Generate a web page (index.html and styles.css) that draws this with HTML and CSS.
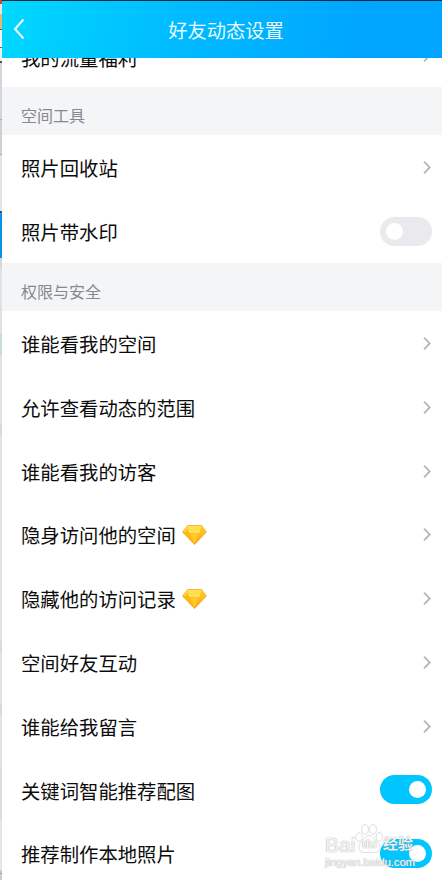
FILE: index.html
```html
<!DOCTYPE html>
<html lang="zh-CN">
<head>
    <meta charset="UTF-8">
    <meta name="viewport" content="width=device-width, initial-scale=1.0">
    <title>好友动态设置</title>
    <link rel="stylesheet" href="styles.css">
</head>
<body>
    <svg class="defs" width="0" height="0">
        <defs>
            <linearGradient id="gold" x1="0" y1="0" x2="0" y2="1">
                <stop offset="0" stop-color="#ffd43a"/>
                <stop offset="1" stop-color="#fb9d09"/>
            </linearGradient>
            <symbol id="arrow" viewBox="0 0 8 13">
                <path d="M1 .7l5.700 5.800L1 12.300" fill="none" stroke="#b2b6bd" stroke-width="1.8"/>
            </symbol>
            <symbol id="diamond" viewBox="0 0 25 20">
                <path d="M5.5 .5h14L24.5 7 12.5 19.5.5 7z" fill="url(#gold)" stroke="#f3a41c" stroke-width=".7" stroke-linejoin="round"/>
                <path d="M5.5 1L1 7h5.5z" fill="#ffc126"/>
                <path d="M5.5 1h14L18 7H7z" fill="#ffe04b"/>
                <path d="M19.5 1L24 7h-6z" fill="#ffc22b"/>
                <path d="M7 7h11l-5.500 12z" fill="#ffc928"/>
                <path d="M1 7h6l5.500 12z" fill="#ffb512"/>
                <path d="M6 1.500L2.500 6.500M7 7h11" fill="none" stroke="#fff0a0" stroke-width=".8"/>
            </symbol>
        </defs>
    </svg>
    <div class="edge"></div>
    <div class="screen">
        <header class="header">
            <svg class="back" width="12" height="22" viewBox="0 0 12 22">
                <path d="M11.500 1.500L3 11l8.500 9.500" fill="none" stroke="#e8fbff" stroke-width="2.2"/>
            </svg>
            <h1>好友动态设置</h1>
        </header>
        <main class="list">
            <div class="row first"><span>我的流量福利</span><svg class="arrow"><use href="#arrow"/></svg></div>

            <h2 class="section">空间工具</h2>
            <div class="row"><span>照片回收站</span><svg class="arrow"><use href="#arrow"/></svg></div>
            <div class="row"><span>照片带水印</span><i class="switch"></i></div>

            <h2 class="section">权限与安全</h2>
            <div class="row"><span>谁能看我的空间</span><svg class="arrow"><use href="#arrow"/></svg></div>
            <div class="row"><span>允许查看动态的范围</span><svg class="arrow"><use href="#arrow"/></svg></div>
            <div class="row"><span>谁能看我的访客</span><svg class="arrow"><use href="#arrow"/></svg></div>
            <div class="row"><span>隐身访问他的空间</span><svg class="diamond"><use href="#diamond"/></svg><svg class="arrow"><use href="#arrow"/></svg></div>
            <div class="row"><span>隐藏他的访问记录</span><svg class="diamond"><use href="#diamond"/></svg><svg class="arrow"><use href="#arrow"/></svg></div>
            <div class="row"><span>空间好友互动</span><svg class="arrow"><use href="#arrow"/></svg></div>
            <div class="row"><span>谁能给我留言</span><svg class="arrow"><use href="#arrow"/></svg></div>
            <div class="row"><span>关键词智能推荐配图</span><i class="switch on"></i></div>
            <div class="row"><span>推荐制作本地照片</span><i class="switch on"></i></div>
        </main>
    </div>
    <div class="watermark">
        <div class="brand">
            <b>Bai</b>
            <span class="paw">
                <svg width="28" height="29" viewBox="0 0 28 29">
                    <ellipse cx="4" cy="13" rx="3.200" ry="4.200"/>
                    <ellipse cx="10" cy="5.500" rx="3.400" ry="4.700"/>
                    <ellipse cx="18" cy="5.500" rx="3.400" ry="4.700"/>
                    <ellipse cx="24.300" cy="13" rx="3.200" ry="4.200"/>
                    <path d="M14 11.500c-4 0-5 4-8 6.500s-3 10 2 10.500 8-.8 12 0 7-6 3-9.500-5-7.500-9-7.500z"/>
                </svg>
                <em>du</em>
            </span>
            <strong>经验</strong>
        </div>
        <div class="site">jingyan.baidu.com</div>
    </div>
</body>
</html>
```
FILE: styles.css
```css
body {
    margin: 0;
    height: 880px;
    display: flex;
    overflow: hidden;
    position: relative;
    background: #fff;
    font-family: "Noto Sans CJK SC", sans-serif;
}

.defs {
    position: absolute;
}

/* sliver of the window behind the phone screen */
.edge {
    width: 2px;
    flex: none;
    background: linear-gradient(#c8452b 0 4px, #e4e6e8 4px 14px, #e9b96a 14px 29px, #555 29px 30px, #f2f2f2 30px 47px, #666 47px 48px, #eee 48px 61px, #555 61px 63px, #d4d5d8 63px 119px, #aaa 119px 120px, #d0d0d2 120px 154px, #aaa 154px 155px, #e4e4e4 155px 211px, #38506e 211px 213px, #0c94e4 213px 258px, #d8d8d8 258px 269px, #e1e1e1 269px 334px, #c9dadd 334px 355px, #e2e2e2 355px 424px, #d9d9d9 424px 435px, #e2e2e2 435px 641px, #dadada 641px 652px, #e2e2e2 652px 704px, #dadada 704px 715px, #e2e2e2 715px 767px, #dcdcdc 767px 820px, #e6e6e6 820px 870px, #ccc 870px 873px, #999 873px 874px, #ccc 874px);
}

.screen {
    flex: 1;
}

.header {
    position: relative;
    z-index: 1;
    box-sizing: border-box;
    height: 58px;
    padding: 0 12px 0 10px;
    border-top: 1px solid #06283e;
    display: flex;
    align-items: center;
    background: linear-gradient(100deg, #00d8ff 0%, #00baff 42%, #00a5ff 82%, #00a5ff 100%);
}

.back {
    margin-top: -1px;
}

h1 {
    flex: 1;
    margin: 0;
    padding-right: 2px;
    color: #e8fbff;
    font-size: 19.3px;
    font-weight: 400;
    line-height: 28px;
    text-align: center;
}

/* scrolled part way under the header */
.list {
    margin-top: -34px;
}

.row {
    box-sizing: border-box;
    height: 63.8px;
    padding: 0 10px 0 19px;
    display: flex;
    align-items: center;
    color: #0c0c0c;
    font-size: 19.35px;
    line-height: 28px;
}

.row.first {
    height: 63px;
}

.row span {
    padding-top: 3px;
}

.row.first span {
    padding-top: 4px;
}

.section {
    box-sizing: border-box;
    height: 48px;
    margin: 0;
    padding: 16px 19px 0;
    background: #f4f5f7;
    color: #858890;
    font-size: 16px;
    font-weight: 400;
    line-height: 24px;
}

.arrow {
    width: 8px;
    height: 13px;
    margin-left: auto;
    margin-right: 1px;
    margin-top: 2px;
}

.first .arrow {
    margin-top: 0;
}

.diamond {
    width: 25px;
    height: 20px;
    margin-left: 6px;
    margin-top: 2px;
}

.switch {
    box-sizing: border-box;
    width: 52px;
    height: 29px;
    margin-left: auto;
    margin-top: 1px;
    padding: 6px;
    border-radius: 15px;
    background: #e9e9ee;
}

.switch::before {
    content: "";
    display: block;
    width: 17px;
    height: 17px;
    border-radius: 50%;
    background: #fff;
}

.switch.on {
    background: #00c6ff;
}

.switch.on::before {
    margin-left: auto;
}

.watermark {
    position: absolute;
    left: 325px;
    top: 826px;
    width: 90px;
    color: rgba(255, 255, 255, 0.9);
    font-family: "Liberation Sans", "Noto Sans CJK SC", sans-serif;
    text-shadow: 0 0 1px #aaa, 0 0 1px #bbb;
}

.brand {
    display: flex;
    height: 29px;
    align-items: flex-end;
}

.brand b {
    width: 30px;
    font-size: 21px;
    font-weight: 400;
    line-height: 20px;
}

.brand strong {
    font-size: 15px;
    font-weight: 500;
    line-height: 22px;
    white-space: nowrap;
}

.paw {
    position: relative;
    width: 28px;
    height: 31px;
}

.paw svg {
    fill: rgba(255, 255, 255, 0.7);
    stroke: #d5d5d5;
    stroke-width: 0.8;
}

.paw em {
    position: absolute;
    left: 7px;
    top: 13px;
    font-size: 12px;
    font-style: normal;
    font-weight: 700;
    line-height: 14px;
}

.site {
    font-size: 11.2px;
    font-weight: 400;
    line-height: 15px;
}
```
